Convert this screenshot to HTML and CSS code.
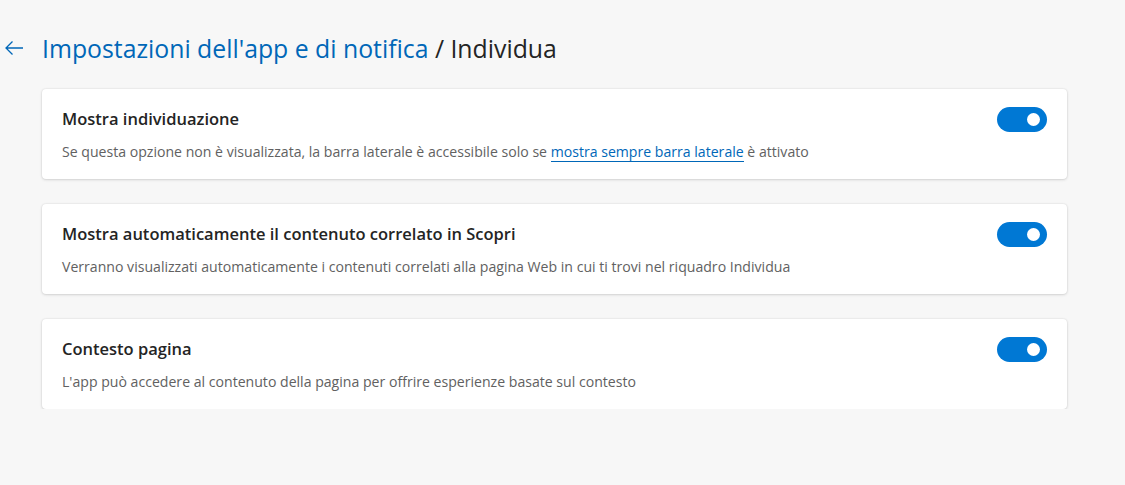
FILE: index.html
```html
<!DOCTYPE html>
<html lang="it">
<head>
    <meta charset="UTF-8">
    <title>Individua</title>
    <link rel="stylesheet" href="styles.css">
</head>
<body>
    <div class="header">
        <button class="back" aria-label="Indietro">
            <svg width="20" height="16" viewBox="0 0 20 16">
                <path d="M19 8H2M8.5 1.5L2 8l6.5 6.5" fill="none" stroke="#0067b8" stroke-width="1.3"/>
            </svg>
        </button>
        <h1><a href="#">Impostazioni dell'app e di notifica</a> / Individua</h1>
    </div>

    <div class="content">
        <div class="card">
            <div class="card-text">
                <h2>Mostra individuazione</h2>
                <p>Se questa opzione non è visualizzata, la barra laterale è accessibile solo se <a href="#">mostra sempre barra laterale</a> è attivato</p>
            </div>
            <span class="toggle on"></span>
        </div>

        <div class="card">
            <div class="card-text">
                <h2>Mostra automaticamente il contenuto correlato in Scopri</h2>
                <p>Verranno visualizzati automaticamente i contenuti correlati alla pagina Web in cui ti trovi nel riquadro Individua</p>
            </div>
            <span class="toggle on"></span>
        </div>

        <div class="card">
            <div class="card-text">
                <h2>Contesto pagina</h2>
                <p>L'app può accedere al contenuto della pagina per offrire esperienze basate sul contesto</p>
            </div>
            <span class="toggle on"></span>
        </div>
    </div>
</body>
</html>
```

FILE: styles.css
```css
body {
    margin: 0;
    padding: 0;
    background-color: #f7f7f7;
    font-family: "Open Sans", "Noto Sans", Arial, sans-serif;
    color: #242424;
}

.header {
    display: flex;
    align-items: center;
    height: 96px;
    padding-left: 4px;
    box-sizing: border-box;
}

.back {
    display: flex;
    align-items: center;
    background: none;
    border: none;
    padding: 0;
    margin-right: 18px;
    cursor: pointer;
}

.header h1 {
    margin: 0;
    font-size: 24.8px;
    font-weight: 500;
    color: #242424;
}

.header h1 a {
    color: #0067b8;
    text-decoration: none;
}

.content {
    display: flex;
    flex-direction: column;
    gap: 25px;
    width: 1025px;
    margin-left: 42px;
    margin-top: -7px;
}

.card {
    display: flex;
    align-items: flex-start;
    justify-content: space-between;
    height: 90px;
    padding: 18px 20px 0 20px;
    box-sizing: border-box;
    background-color: #fff;
    border-radius: 4px;
    box-shadow: 0 0 2px rgba(0, 0, 0, 0.12), 0 1px 3px rgba(0, 0, 0, 0.12);
}

.card h2 {
    margin: 0;
    font-size: 16.5px;
    font-weight: 600;
    line-height: 24px;
}

.card p {
    margin: 11px 0 0;
    font-size: 14.1px;
    line-height: 20px;
    color: #616161;
}

.card p a {
    color: #0067b8;
    text-decoration: none;
    border-bottom: 1px solid #0067b8;
}

.toggle {
    position: relative;
    width: 50px;
    height: 25px;
    border-radius: 13px;
    background-color: #0078d4;
    flex-shrink: 0;
}

.toggle.on::after {
    content: "";
    position: absolute;
    top: 6px;
    right: 7px;
    width: 13px;
    height: 13px;
    border-radius: 50%;
    background-color: #fff;
}
```
